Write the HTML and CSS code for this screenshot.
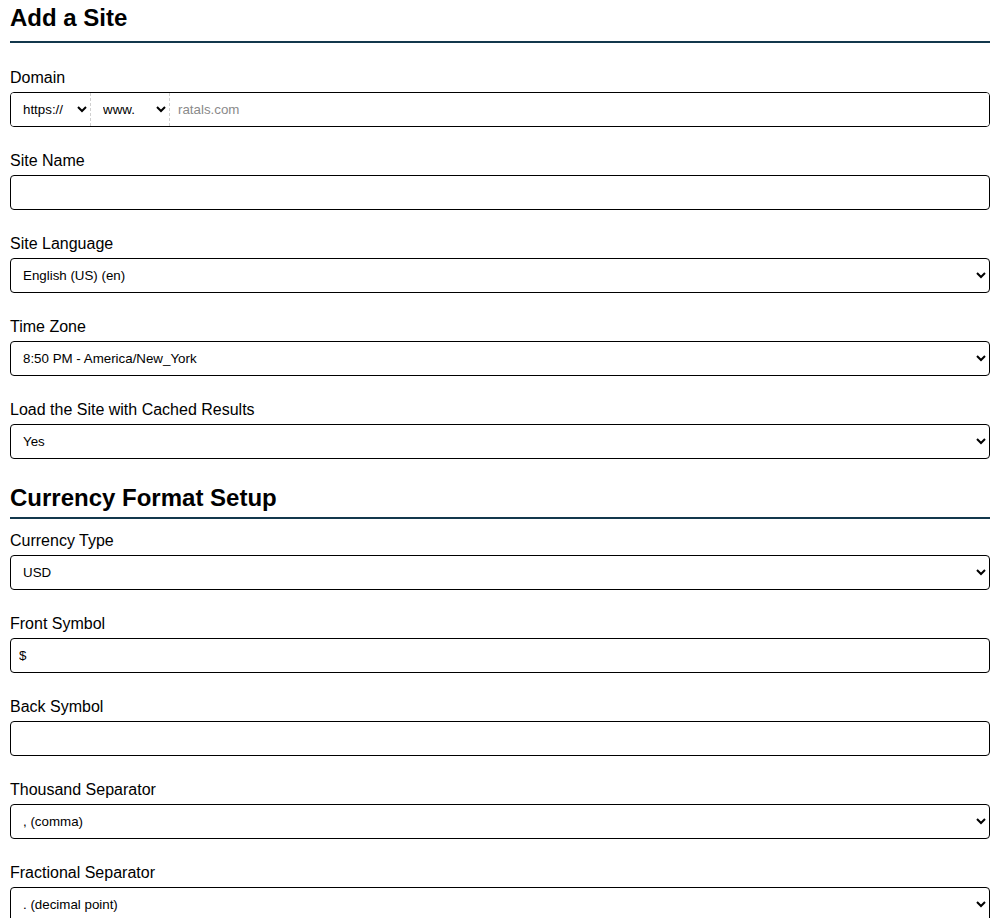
FILE: index.html
```html
<!DOCTYPE html>
<html lang="en">
<head>
<meta charset="utf-8">
<title>Add a Site</title>
<link rel="stylesheet" href="styles.css">
</head>
<body>
<form class="form">
  <h2 class="title">Add a Site</h2>

  <div class="group">
    <label class="label">Domain</label>
    <div class="domain">
      <select class="dsel dsel-proto"><option>https://</option><option>http://</option></select>
      <select class="dsel dsel-www"><option>www.</option><option>(none)</option></select>
      <input class="dinput" type="text" placeholder="ratals.com">
    </div>
  </div>

  <div class="group">
    <label class="label">Site Name</label>
    <input class="field" type="text">
  </div>

  <div class="group">
    <label class="label">Site Language</label>
    <select class="field sel"><option>English (US) (en)</option></select>
  </div>

  <div class="group">
    <label class="label">Time Zone</label>
    <select class="field sel"><option>8:50 PM - America/New_York</option></select>
  </div>

  <div class="group">
    <label class="label">Load the Site with Cached Results</label>
    <select class="field sel"><option>Yes</option><option>No</option></select>
  </div>

  <h3 class="title title-sm">Currency Format Setup</h3>

  <div class="group">
    <label class="label">Currency Type</label>
    <select class="field sel"><option>USD</option></select>
  </div>

  <div class="group">
    <label class="label">Front Symbol</label>
    <input class="field" type="text" value="$">
  </div>

  <div class="group">
    <label class="label">Back Symbol</label>
    <input class="field" type="text">
  </div>

  <div class="group">
    <label class="label">Thousand Separator</label>
    <select class="field sel"><option>, (comma)</option></select>
  </div>

  <div class="group">
    <label class="label">Fractional Separator</label>
    <select class="field sel"><option>. (decimal point)</option></select>
  </div>
</form>
</body>
</html>
```

FILE: styles.css
```css
html, body {
  margin: 0;
  padding: 0;
  background: #fff;
}
body {
  padding: 0 10px;
  font-family: "Liberation Sans", Arial, sans-serif;
  color: #000;
}
.form {
  display: flex;
  flex-direction: column;
}
.title {
  margin: 0;
  padding-top: 4px;
  font-size: 24px;
  line-height: 28px;
  font-weight: bold;
  padding-bottom: 9px;
  border-bottom: 2px solid #13384c;
  margin-bottom: 26px;
}
.title-sm {
  line-height: 26px;
  padding-top: 1px;
  padding-bottom: 6px;
  margin-bottom: 13px;
  margin-top: 0;
}
.group {
  display: flex;
  flex-direction: column;
  margin-bottom: 25px;
}
.label {
  font-size: 16px;
  line-height: 18px;
  margin-bottom: 5px;
}
.field {
  box-sizing: border-box;
  width: 100%;
  height: 35px;
  border: 1px solid #000;
  border-radius: 4px;
  background: #fff;
  font-family: "Liberation Sans", Arial, sans-serif;
  font-size: 13.333px;
  color: #000;
  padding: 0 8px;
  margin: 0;
}
.sel {
  padding-left: 8px;
}
.domain {
  box-sizing: border-box;
  height: 35px;
  border: 1px solid #000;
  border-radius: 4px;
  display: flex;
  align-items: stretch;
  overflow: hidden;
}
.dsel {
  border: none;
  border-right: 1px dashed #d0d0d0;
  background: #fff;
  font-family: "Liberation Sans", Arial, sans-serif;
  font-size: 13.333px;
  color: #000;
  padding: 0 4px 0 8px;
  margin: 0;
  outline: none;
}
.dsel-proto { width: 80px; }
.dsel-www { width: 79px; }
.dinput {
  flex: 1;
  border: none;
  outline: none;
  font-family: "Liberation Sans", Arial, sans-serif;
  font-size: 13.333px;
  padding: 0 8px;
  margin: 0;
  background: #fff;
}
.dinput::placeholder {
  color: #8a8a8a;
}
```
